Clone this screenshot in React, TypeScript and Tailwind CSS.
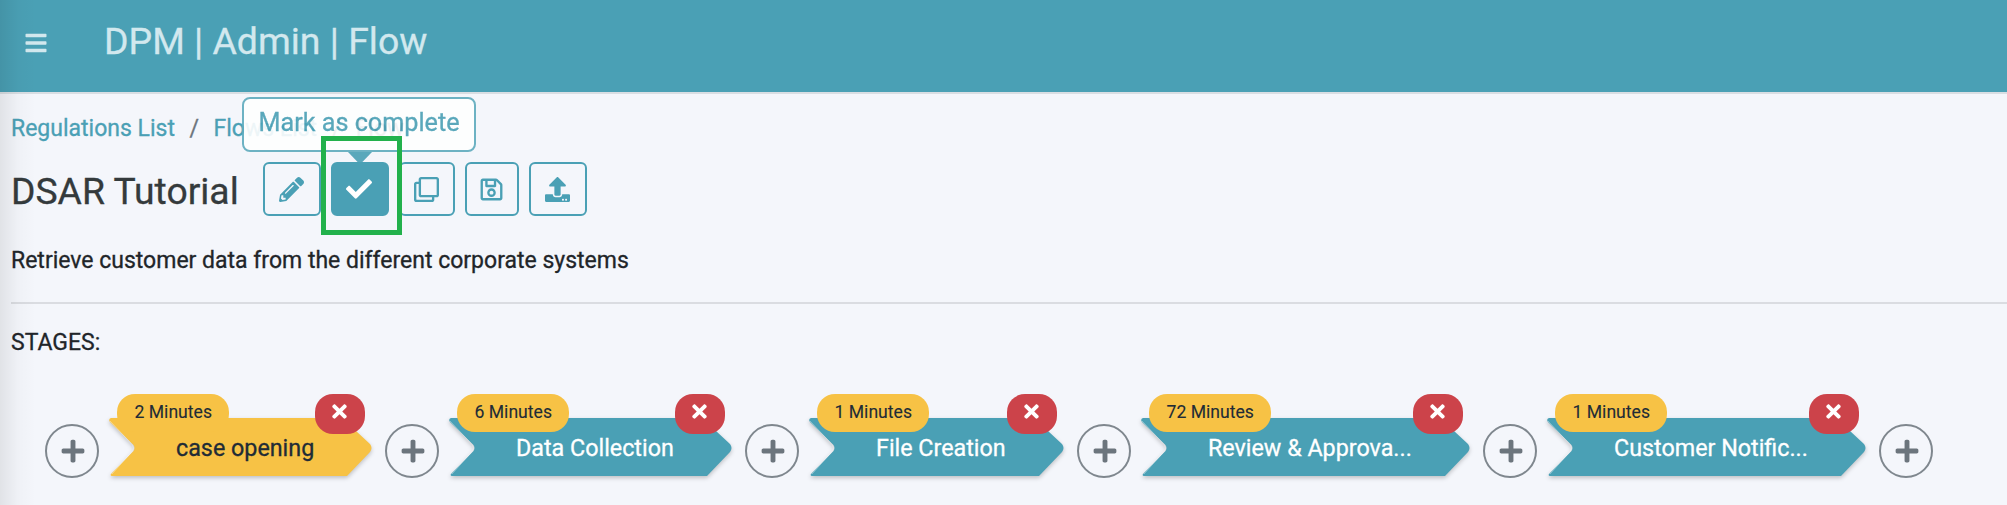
import React from "react";
import {
  FaBars,
  FaCheck,
  FaPencilAlt,
  FaPlus,
  FaRegClone,
  FaRegSave,
  FaTimes,
  FaUpload,
} from "react-icons/fa";

type Stage = { name: string; time: string; width: number; active?: boolean };

const stages: Stage[] = [
  { name: "case opening", time: "2 Minutes", width: 263, active: true },
  { name: "Data Collection", time: "6 Minutes", width: 283 },
  { name: "File Creation", time: "1 Minutes", width: 255 },
  { name: "Review & Approva...", time: "72 Minutes", width: 329 },
  { name: "Customer Notific...", time: "1 Minutes", width: 319 },
];

function AddButton() {
  return (
    <button className="mt-[30px] flex size-[54px] shrink-0 items-center justify-center rounded-full border-2 border-[#7f878e] text-[#6c757d]">
      <FaPlus className="mb-px ml-px size-[26px]" />
    </button>
  );
}

function StageArrow({ name, time, width, active }: Stage) {
  const w = width;
  return (
    <div className="relative mr-[13px] ml-[10px] h-[82px] shrink-0 pt-6" style={{ width }}>
      <svg
        className="absolute top-6 left-0 overflow-visible drop-shadow-[0_2px_2px_rgba(0,0,0,0.22)]"
        width={w}
        height="58"
        viewBox={`0 0 ${w} 58`}
      >
        <path
          d={`M2 0H${w - 30}L${w - 2} 26Q${w + 1} 30 ${w - 2} 34L${w - 25} 58H3Q1 58 2 56L24.500 33Q26.500 30 24.500 27L1 4Q-1 1 2 0Z`}
          fill={active ? "#f7c245" : "#4aa0b5"}
        />
        <path d="M1 3L23.500 27Q25.500 30 23.500 33L3 56" fill="none" stroke="#ffffff" strokeOpacity="0.45" strokeWidth="0.800" />
      </svg>
      <span
        className={`relative flex h-[58px] items-center pt-[2px] pl-[67px] text-[23.300px] whitespace-nowrap [-webkit-text-stroke:0.3px] ${
          active ? "text-[#212b36]" : "text-white"
        }`}
      >
        {name}
      </span>
      <span className="absolute top-0 left-2 flex h-[38px] items-center rounded-[18px] bg-[#f7c245] px-[17.500px] pb-[2px] text-[17.600px] whitespace-nowrap text-[#212b36] [-webkit-text-stroke:0.1px]">
        {time}
      </span>
      <button className="absolute top-0 right-[7px] flex h-10 w-[50px] items-center justify-center rounded-[18px] bg-[#cc434a] pr-px pb-[5px] text-white">
        <FaTimes className="size-[21px]" />
      </button>
    </div>
  );
}

const tool =
  "flex h-[54px] items-center justify-center rounded-[6px] border-2 border-[#4aa0b5] pr-[2px] text-[#4aa0b5]";

export default function App() {
  return (
    <div className="relative h-[505px] w-[2007px] overflow-hidden bg-[#f4f6fb] font-[Roboto,sans-serif] text-[#212529]">
      <header className="flex h-[94px] items-start border-b-2 border-[#d9dee3] bg-[#4aa0b5] text-[#d2e8ee]">
        <FaBars className="mt-[31px] ml-[24px] size-[24px]" />
        <h1 className="mt-[16px] ml-[56px] text-[37.400px] leading-[50px] [-webkit-text-stroke:0.3px]">
          DPM | Admin | Flow
        </h1>
      </header>

      <main className="pl-[11px] [-webkit-text-stroke:0.3px]">
        <nav className="flex h-[68px] items-center pt-[2px] text-[23px] text-[#4aa0b5]">
          <span>Regulations List</span>
          <span className="px-[14.500px] text-[#6c757d]">/</span>
          <span>Flows List</span>
          <span className="px-[14.500px] text-[#6c757d]">/</span>
          <span className="text-[#6c757d]">Flow</span>
        </nav>

        <div className="flex h-[54px] items-center">
          <h2 className="w-[252px] pt-[5px] text-[37.300px] whitespace-nowrap text-[#343a3c]">DSAR Tutorial</h2>
          <div className="flex gap-[10px]">
            <button className={`${tool} w-[58px]`}>
              <FaPencilAlt className="size-[25px]" />
            </button>
            <div className="relative">
              <button className={`${tool} w-[58px] bg-[#4aa0b5]`}>
                <FaCheck className="size-[26px] text-white" />
              </button>
              <div className="absolute -top-[65px] -left-[89px] z-10 opacity-90">
                <div className="flex h-[55px] w-[234px] items-center justify-center rounded-[8px] border-2 border-[#5fabbd] bg-white pb-[3px] text-[25.200px] whitespace-nowrap text-[#4aa0b5]">
                  Mark as complete
                </div>
                <div className="ml-[106px] h-[10px] w-6 bg-[#4aa0b5] [clip-path:polygon(0_0,100%_0,60%_100%,40%_100%)]" />
              </div>
              <div className="absolute -top-[26px] -left-[10px] z-20 h-[99px] w-[81px] border-5 border-[#22b14c]" />
            </div>
            <button className={`${tool} w-[56px]`}>
              <FaRegClone className="size-[25px]" />
            </button>
            <button className={`${tool} w-[54px]`}>
              <FaRegSave className="size-[25px]" />
            </button>
            <button className={`${tool} w-[58px]`}>
              <FaUpload className="size-[25px]" />
            </button>
          </div>
        </div>

        <p className="mt-[29px] text-[23px] leading-[32px]">Retrieve customer data from the different corporate systems</p>
        <hr className="mt-[25px] border-t-2 border-[#dadce1]" />
        <p className="mt-[23px] text-[23px] leading-[32px]">STAGES:</p>

        <div className="mt-[35px] flex pl-[34px]">
          {stages.map((stage) => (
            <React.Fragment key={stage.name}>
              <AddButton />
              <StageArrow {...stage} />
            </React.Fragment>
          ))}
          <AddButton />
        </div>
      </main>

      <div className="pointer-events-none absolute inset-y-0 left-0 z-30 w-9 bg-linear-to-r from-black/8 via-black/2 to-transparent" />
    </div>
  );
}
